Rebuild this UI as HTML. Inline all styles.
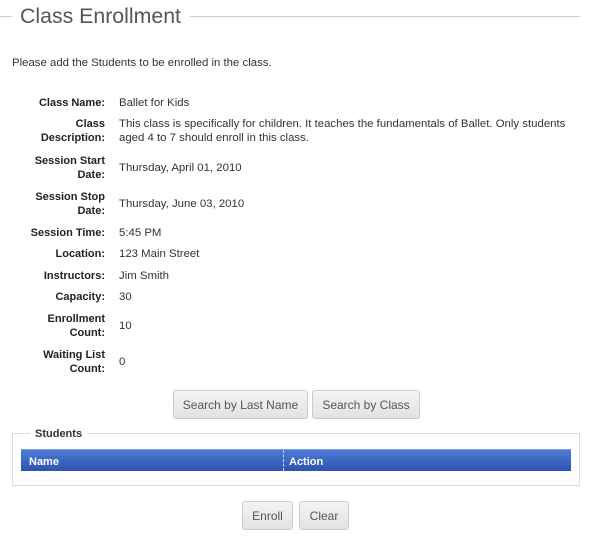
<!DOCTYPE html>
<html><head><meta charset="utf-8"><style>
body{margin:0;width:607px;height:536px;background:#fff;font-family:"Liberation Sans",sans-serif;font-size:11.4px;color:#333;position:relative;overflow:hidden}
.a{position:absolute;white-space:nowrap}
.l{position:absolute;right:502px;text-align:right;font-weight:bold;color:#222;line-height:14px;white-space:nowrap;font-size:11px}
.v{position:absolute;left:119px;line-height:14px;white-space:nowrap;color:#333}
.btn{position:absolute;height:28px;border:1px solid #ccc;border-radius:3px;background:linear-gradient(#f4f4f4,#e2e2e2);color:#555;font-size:12px;line-height:28px;text-align:center;box-sizing:border-box}
</style></head><body>
<div class="a" style="left:0;top:16px;width:12px;border-top:1px solid #ccc"></div>
<div class="a" style="left:20px;top:2px;font-size:21.3px;color:#555;line-height:28px">Class Enrollment</div>
<div class="a" style="left:190px;top:16px;width:390px;border-top:1px solid #ccc"></div>
<div class="a" style="left:12px;top:56px;line-height:14px">Please add the Students to be enrolled in the class.</div>

<div class="l" style="top:96px">Class Name:</div><div class="v" style="top:96px">Ballet for Kids</div>
<div class="l" style="top:117px">Class<br>Description:</div><div class="v" style="top:117px">This class is specifically for children. It teaches the fundamentals of Ballet. Only students<br>aged 4 to 7 should enroll in this class.</div>
<div class="l" style="top:154px">Session Start<br>Date:</div><div class="v" style="top:161px">Thursday, April 01, 2010</div>
<div class="l" style="top:190px">Session Stop<br>Date:</div><div class="v" style="top:197px">Thursday, June 03, 2010</div>
<div class="l" style="top:226px">Session Time:</div><div class="v" style="top:226px">5:45 PM</div>
<div class="l" style="top:247px">Location:</div><div class="v" style="top:247px">123 Main Street</div>
<div class="l" style="top:269px">Instructors:</div><div class="v" style="top:269px">Jim Smith</div>
<div class="l" style="top:290px">Capacity:</div><div class="v" style="top:290px">30</div>
<div class="l" style="top:312px">Enrollment<br>Count:</div><div class="v" style="top:319px">10</div>
<div class="l" style="top:348px">Waiting List<br>Count:</div><div class="v" style="top:355px">0</div>

<div class="btn" style="left:173px;top:390px;width:135px;height:29px;line-height:29px">Search by Last Name</div>
<div class="btn" style="left:312px;top:390px;width:108px;height:29px;line-height:29px">Search by Class</div>

<div class="a" style="left:12px;top:433px;width:568px;height:53px;border:1px solid #ddd;box-sizing:border-box"></div>
<div class="a" style="left:30px;top:427px;background:#fff;padding:0 5px;font-weight:bold;color:#333;line-height:14px;font-size:11px">Students</div>
<div class="a" style="left:21px;top:449px;width:550px;height:22px;background:linear-gradient(#4c7bd4,#2e53b0);border-top:1px solid #7ea0e0;box-sizing:border-box"></div>
<div class="a" style="left:283px;top:450px;height:21px;border-left:1px dashed #c8d4f0"></div>
<div class="a" style="left:29px;top:455px;color:#fff;font-weight:bold;line-height:14px;font-size:11px">Name</div>
<div class="a" style="left:289px;top:455px;color:#fff;font-weight:bold;line-height:14px;font-size:11px">Action</div>

<div class="btn" style="left:242px;top:501px;width:51px;height:29px;line-height:29px">Enroll</div>
<div class="btn" style="left:299px;top:501px;width:50px;height:29px;line-height:29px">Clear</div>
</body></html>
